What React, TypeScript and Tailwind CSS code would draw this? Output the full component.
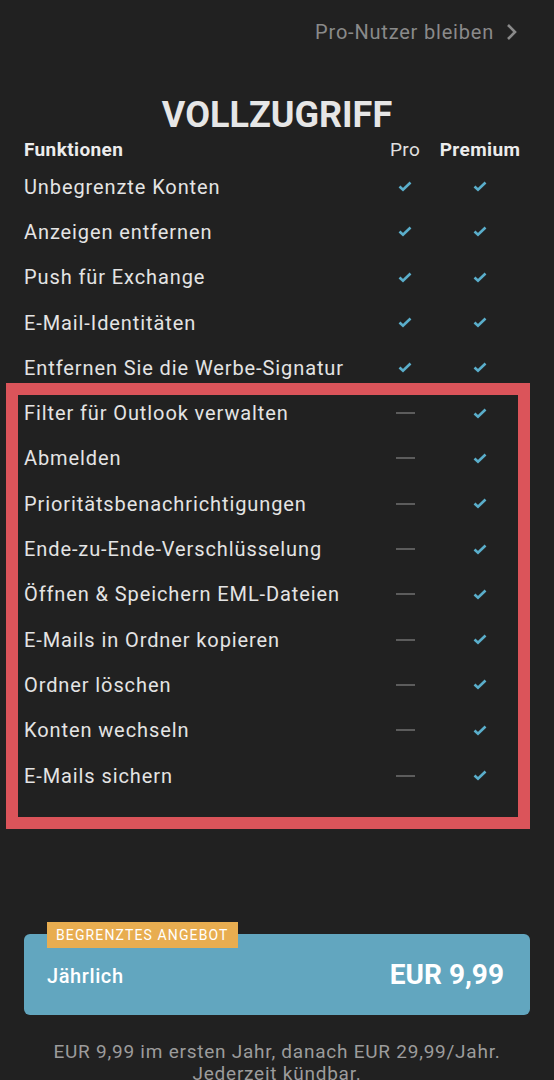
import React from "react";

const features: { name: string; pro: boolean }[] = [
  { name: "Unbegrenzte Konten", pro: true },
  { name: "Anzeigen entfernen", pro: true },
  { name: "Push für Exchange", pro: true },
  { name: "E-Mail-Identitäten", pro: true },
  { name: "Entfernen Sie die Werbe-Signatur", pro: true },
  { name: "Filter für Outlook verwalten", pro: false },
  { name: "Abmelden", pro: false },
  { name: "Prioritätsbenachrichtigungen", pro: false },
  { name: "Ende-zu-Ende-Verschlüsselung", pro: false },
  { name: "Öffnen & Speichern EML-Dateien", pro: false },
  { name: "E-Mails in Ordner kopieren", pro: false },
  { name: "Ordner löschen", pro: false },
  { name: "Konten wechseln", pro: false },
  { name: "E-Mails sichern", pro: false },
];

function Check() {
  return (
    <svg width="14" height="11" viewBox="0 0 14 11" fill="none">
      <polyline
        points="1.5,5.5 5,8.8 12.5,1.5"
        stroke="#5aaecb"
        strokeWidth="2.6"
        strokeLinecap="butt"
        strokeLinejoin="miter"
      />
    </svg>
  );
}

function Dash() {
  return <div className="h-[2px] w-[19px] bg-[#5c5c5c]" />;
}

export default function App() {
  return (
    <div
      className="min-h-screen w-full overflow-hidden bg-[#212121] text-[#e4e4e4]"
      style={{ fontFamily: "Roboto, 'Noto Sans', sans-serif" }}
    >
      {/* Top link */}
      <div className="flex h-16 items-center justify-end pr-[36px]">
        <span className="text-[20px] tracking-[0.04em] text-[#8a8a8a]">Pro-Nutzer bleiben</span>
        <svg className="ml-[12px]" width="12" height="18" viewBox="0 0 12 18" fill="none">
          <polyline points="2,2 9,9 2,16" stroke="#8a8a8a" strokeWidth="2.6" />
        </svg>
      </div>

      <h1 className="mt-[33px] text-center text-[36px] font-bold leading-[36px] text-[#e6e6e6]">
        VOLLZUGRIFF
      </h1>

      {/* Table */}
      <div className="relative mt-[3px]">
        <div className="flex h-[28px] items-center pl-6 pr-[36px] text-[19px] tracking-[0.02em]">
          <div className="flex-1 font-bold text-[#ececec]">Funktionen</div>
          <div className="flex w-[74px] justify-center text-[#e0e0e0]">Pro</div>
          <div className="flex w-[76px] justify-center font-bold text-[#ececec]">Premium</div>
        </div>
        {features.map((f) => (
          <div key={f.name} className="flex h-[45.3px] items-center pl-6 pr-[36px]">
            <div className="flex-1 text-[20px] tracking-[0.045em]">{f.name}</div>
            <div className="flex w-[74px] justify-center">{f.pro ? <Check /> : <Dash />}</div>
            <div className="flex w-[76px] justify-center">
              <Check />
            </div>
          </div>
        ))}

        {/* Highlight annotation */}
        <div className="pointer-events-none absolute left-[6px] top-[247px] h-[446px] w-[524px] border-[12px] border-[#db545a]" />
      </div>

      {/* Offer card */}
      <div className="relative mx-6 mt-[136px] flex h-[81px] items-center justify-between rounded-md bg-[#62a6bf] pl-[23px] pr-[26px] text-white">
        <div className="absolute left-[23px] top-[-12px] bg-[#e8ad50] px-[9px] py-[3px] text-[14px] leading-[20px] tracking-[0.08em] text-white">
          BEGRENZTES ANGEBOT
        </div>
        <span className="mt-[3px] text-[20px] font-medium tracking-[0.03em]">Jährlich</span>
        <span className="text-[28px] font-bold">EUR 9,99</span>
      </div>

      <p className="mt-[26px] px-2 text-center text-[19px] leading-[22px] tracking-[0.04em] text-[#9c9c9c]">
        EUR 9,99 im ersten Jahr, danach EUR 29,99/Jahr.
        <br />
        Jederzeit kündbar.
      </p>
    </div>
  );
}
